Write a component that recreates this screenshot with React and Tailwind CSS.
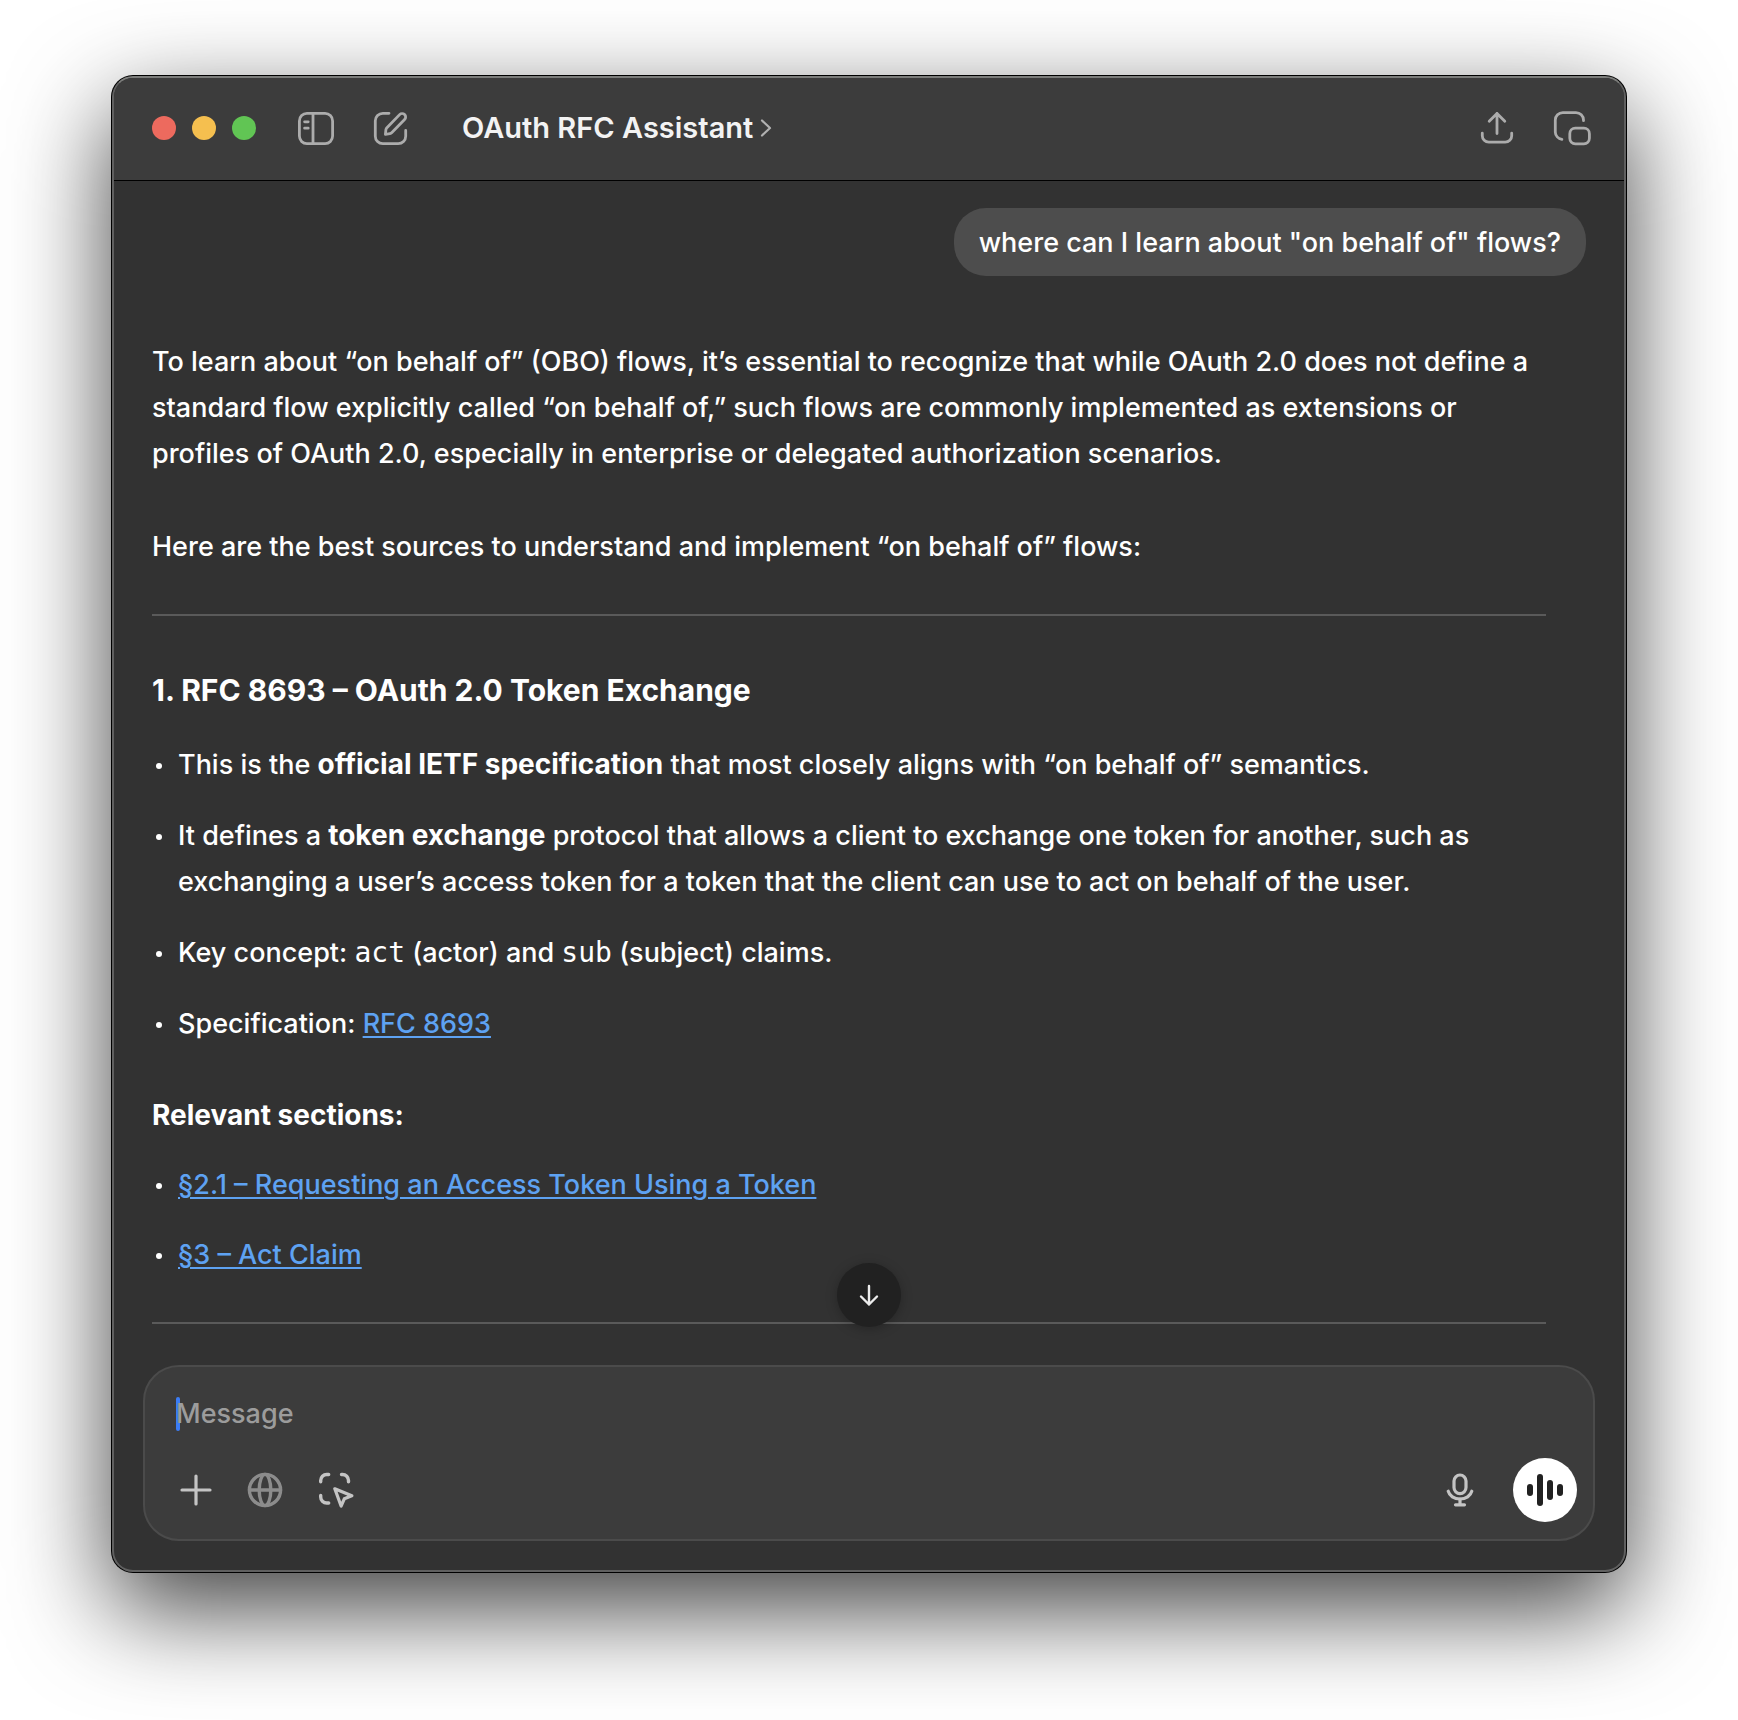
import React from "react";

const stroke = {
  fill: "none",
  stroke: "currentColor",
  strokeLinecap: "round",
  strokeLinejoin: "round",
};

function SidebarIcon() {
  return (
    <svg width="36" height="36" viewBox="0 0 36 36" strokeWidth="2.8" {...stroke}>
      <rect x="1.4" y="3.4" width="33.2" height="30.2" rx="7.5" />
      <path d="M15 3.5v30" />
      <path d="M6.6 11.8h3.6M6.6 18.2h3.6" />
    </svg>
  );
}

function ComposeIcon() {
  return (
    <svg width="36" height="36" viewBox="0 0 36 36" strokeWidth="2.8" {...stroke}>
      <path d="M16 3.3h-6.2a7.500 7.500 0 0 0-7.500 7.500v15.400a7.500 7.500 0 0 0 7.500 7.500h15.400a7.500 7.500 0 0 0 7.500-7.500V20.500" />
      <path d="M12.400 24.300l.5-4.600a3.600 3.600 0 0 1 1-2L26.600 4.600a3.500 3.500 0 0 1 5 5L18.900 22.600a3.600 3.600 0 0 1-2 1z" />
    </svg>
  );
}

function ShareIcon() {
  return (
    <svg width="36" height="36" viewBox="0 0 36 36" strokeWidth="2.8" {...stroke}>
      <path d="M3.300 23.200v2.500a6.500 6.500 0 0 0 6.500 6.500h16.400a6.500 6.500 0 0 0 6.500-6.500v-2.500" />
      <path d="M18 23.500V3.400M10.200 11.300L18 3.400l7.800 7.900" />
    </svg>
  );
}

function CompanionIcon() {
  return (
    <svg width="38" height="36" viewBox="0 0 38 36" strokeWidth="2.8" {...stroke}>
      <path d="M30.500 10.700v-.6a7.500 7.500 0 0 0-7.500-7.500H9.800a7.500 7.500 0 0 0-7.500 7.500v12a7.500 7.500 0 0 0 6.600 7.200" />
      <rect x="16.800" y="18.200" width="19.600" height="15.600" rx="5.500" />
    </svg>
  );
}

function PlusIcon() {
  return (
    <svg width="36" height="36" viewBox="0 0 36 36" strokeWidth="3.200" {...stroke}>
      <path d="M18 4v28M4 18h28" />
    </svg>
  );
}

function GlobeIcon() {
  return (
    <svg width="36" height="36" viewBox="0 0 36 36" strokeWidth="3.400" {...stroke}>
      <circle cx="18" cy="18" r="15.600" />
      <ellipse cx="18" cy="18" rx="5.800" ry="15.600" />
      <path d="M2.500 18h31" />
    </svg>
  );
}

function ScreenPickIcon() {
  return (
    <svg width="36" height="36" viewBox="0 0 36 36" strokeWidth="3.400" {...stroke}>
      <path d="M2.700 9.700v-1.200a6 6 0 0 1 6-6h2M23.500 2.500h1a6 6 0 0 1 6 6v1.200M2.700 23.500v1.500a6 6 0 0 0 6 6h2" />
      <path d="M16.800 16.800l17 7-7.500 3-3.200 7.200z" strokeWidth="3.200" />
    </svg>
  );
}

function MicIcon() {
  return (
    <svg width="36" height="36" viewBox="0 0 36 36" strokeWidth="3.200" {...stroke}>
      <rect x="12" y="3" width="12" height="18.600" rx="6" />
      <path d="M6.200 19.200c1.200 4.600 6 7.800 11.800 7.800s10.600-3.200 11.800-7.800" />
      <path d="M18 27v5.500M13.500 32.800h9" />
    </svg>
  );
}

function VoiceIcon() {
  return (
    <svg width="38" height="36" viewBox="0 0 38 36" fill="currentColor">
      <rect x="1" y="12" width="6" height="12" rx="3" />
      <rect x="11" y="2" width="6" height="32" rx="3" />
      <rect x="21" y="8" width="6" height="20" rx="3" />
      <rect x="31" y="12" width="6" height="12" rx="3" />
    </svg>
  );
}

function Divider() {
  return <hr className="h-0.5 border-0 bg-[#5a5a5a]" />;
}

function Item({ children }) {
  return (
    <li className="flex">
      <span aria-hidden="true" className="mt-[21px] mr-4 ml-1 size-[6px] shrink-0 rounded-full bg-white" />
      <p>{children}</p>
    </li>
  );
}

function Strong({ children }) {
  return <strong className="text-[28px] leading-none font-bold">{children}</strong>;
}

function Code({ children }) {
  return <code className="font-['DejaVu_Sans_Mono',monospace] text-[28px] leading-none">{children}</code>;
}

function Link({ children }) {
  return (
    <a href="#" className="text-[#5ea2f2] underline decoration-2 underline-offset-3">
      {children}
    </a>
  );
}

function Header() {
  return (
    <header className="flex h-[103px] items-center border-b border-black bg-[#3c3c3c] pr-[33px] pb-0.5 pl-[38px] text-[#acacac]">
      <div className="flex gap-4">
        <button aria-label="Close" className="size-6 rounded-full bg-[#ed6a5e]" />
        <button aria-label="Minimize" className="size-6 rounded-full bg-[#f5bf4f]" />
        <button aria-label="Zoom" className="size-6 rounded-full bg-[#61c554]" />
      </div>
      <button aria-label="Toggle sidebar" className="ml-[42px]">
        <SidebarIcon />
      </button>
      <button aria-label="New chat" className="ml-[39px]">
        <ComposeIcon />
      </button>
      <button className="ml-[53px] flex items-center gap-[7px] text-[29px] font-semibold text-[#f3f3f3]">
        OAuth RFC Assistant
        <svg width="12" height="20" viewBox="0 0 12 20" strokeWidth="2.200" {...stroke} className="text-[#b0b0b0]">
          <path d="M2 2.500l8 7.500-8 7.500" />
        </svg>
      </button>
      <div className="ml-auto flex gap-[38px]">
        <button aria-label="Share">
          <ShareIcon />
        </button>
        <button aria-label="Open companion window">
          <CompanionIcon />
        </button>
      </div>
    </header>
  );
}

function Composer() {
  return (
    <form className="relative mx-[29px] mb-[29px] rounded-[36px] border-2 border-[#4b4b4b] bg-[#3c3c3c] pt-6 pb-[17px]">
      <button
        type="button"
        aria-label="Scroll to bottom"
        className="absolute bottom-full left-1/2 mb-10 flex size-16 -translate-x-1/2 items-center justify-center rounded-full bg-[#212121] text-[#ececec] shadow-[0_2px_12px_rgba(0,0,0,0.25)]"
      >
        <svg width="24" height="24" viewBox="0 0 24 24" strokeWidth="2.400" {...stroke}>
          <path d="M12 3v18.500M4 13.500l8 8 8-8" />
        </svg>
      </button>
      <div className="relative mx-[31px]">
        <span className="absolute top-1.5 left-0 h-[34px] w-1 rounded-sm bg-[#3b7cf5]" />
        <input
          type="text"
          aria-label="Message"
          placeholder="Message"
          className="relative block h-[46px] w-full bg-transparent outline-none placeholder:text-[#9c9c9c]"
        />
      </div>
      <div className="mt-[21px] flex items-center pr-4 pl-[33px] text-[#c4c4c4]">
        <button type="button" aria-label="Add">
          <PlusIcon />
        </button>
        <button type="button" aria-label="Search the web" className="ml-[33px] text-[#8c8c8c]">
          <GlobeIcon />
        </button>
        <button type="button" aria-label="Work with apps" className="ml-[35px]">
          <ScreenPickIcon />
        </button>
        <button type="button" aria-label="Dictate" className="ml-auto">
          <MicIcon />
        </button>
        <button
          type="button"
          aria-label="Voice mode"
          className="ml-[35px] flex size-16 items-center justify-center rounded-full bg-white text-[#212121]"
        >
          <VoiceIcon />
        </button>
      </div>
    </form>
  );
}

export default function App() {
  return (
    <div className="flex min-h-screen bg-white px-[111px] pt-[75px] pb-[147px] font-['Inter',sans-serif] text-[27px] leading-[46px] font-[450] text-white">
      <div className="flex flex-1 rounded-[22px] bg-black p-px shadow-[0_36px_100px_rgba(0,0,0,0.75)]">
        <div className="flex flex-1 flex-col overflow-hidden rounded-[21px] border-2 border-[#606060] border-t-[#7c7d7b] bg-[#323232]">
          <Header />
          <main className="flex-1 pt-[27px] pl-[38px]">
            <div className="mr-[38px] flex justify-end">
              <p className="rounded-[32px] bg-[#4d4d4d] px-[25px] pt-3 pb-2.5">
                where can I learn about "on behalf of" flows?
              </p>
            </div>
            <article className="mt-[63px] mr-[78px]">
              <p>
                To learn about “on behalf of” (OBO) flows, it’s essential to recognize that while OAuth 2.0 does not
                define a standard flow explicitly called “on behalf of,” such flows are commonly implemented as
                extensions or profiles of OAuth 2.0, especially in enterprise or delegated authorization scenarios.
              </p>
              <p className="mt-[47px] mb-11">
                Here are the best sources to understand and implement “on behalf of” flows:
              </p>
              <Divider />
              <h2 className="mt-[51px] text-[30px] font-bold">1. RFC 8693 – OAuth 2.0 Token Exchange</h2>
              <ul className="mt-[29px] flex flex-col gap-[25px]">
                <Item>
                  This is the <Strong>official IETF specification</Strong> that most closely aligns with “on behalf of”
                  semantics.
                </Item>
                <Item>
                  It defines a <Strong>token exchange</Strong> protocol that allows a client to exchange one token for
                  another, such as exchanging a user’s access token for a token that the client can use to act on
                  behalf of the user.
                </Item>
                <Item>
                  Key concept: <Code>act</Code> (actor) and <Code>sub</Code> (subject) claims.
                </Item>
                <Item>
                  Specification: <Link>RFC 8693</Link>
                </Item>
              </ul>
              <h3 className="mt-[45px] text-[28px] font-bold">Relevant sections:</h3>
              <ul className="mt-6 mb-11 flex flex-col gap-6">
                <Item>
                  <Link>§2.1 – Requesting an Access Token Using a Token</Link>
                </Item>
                <Item>
                  <Link>§3 – Act Claim</Link>
                </Item>
              </ul>
              <Divider />
            </article>
          </main>
          <Composer />
        </div>
      </div>
    </div>
  );
}
